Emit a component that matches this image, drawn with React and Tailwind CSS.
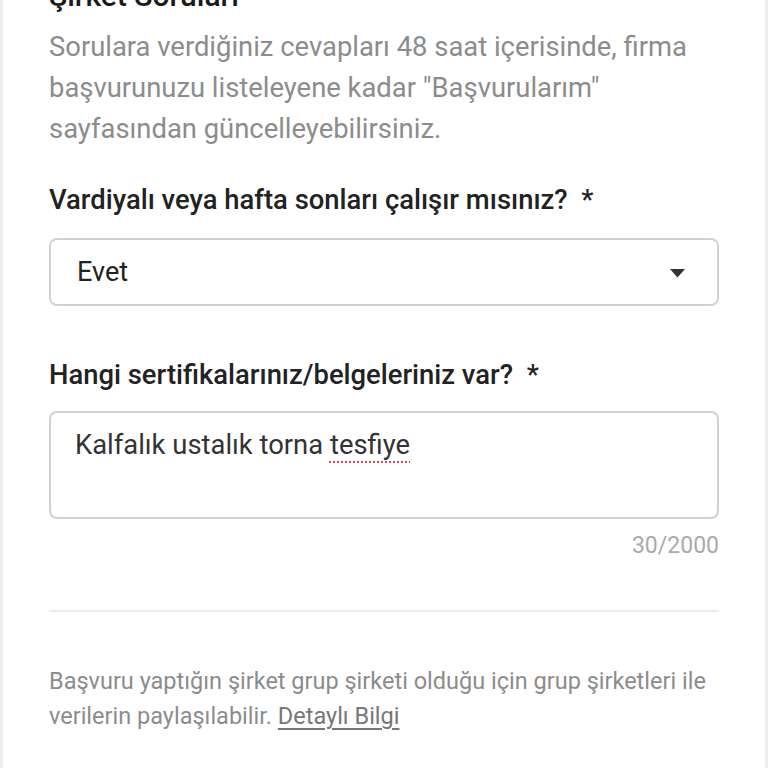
import React from "react";

export default function App() {
  return (
    <div
      className="w-[768px] h-[768px] overflow-hidden bg-[#efefef] px-[3px]"
      style={{ fontFamily: "Roboto, 'Noto Sans', sans-serif" }}
    >
      <div className="flex h-full flex-col bg-white px-[46px]">
        <h2 className="mt-[-22px] text-[30px] leading-[36px] font-medium text-[#1a1a1a]">
          Şirket Soruları
        </h2>
        <p className="mt-[13px] text-[27.4px] leading-[41px] text-[#8c8c8c]">
          Sorulara verdiğiniz cevapları 48 saat içerisinde, firma başvurunuzu listeleyene kadar
          "Başvurularım" sayfasından güncelleyebilirsiniz.
        </p>

        <label className="mt-[34px] block text-[27.4px] leading-[32px] font-medium text-[#222]">
          Vardiyalı veya hafta sonları çalışır mısınız?&nbsp; *
        </label>
        <div className="mt-[22px] flex h-[68px] shrink-0 items-center justify-between rounded-[8px] border-2 border-[#d2d2d2] pl-[26px] pr-[32px]">
          <span className="text-[27px] leading-[36px] text-[#222]">Evet</span>
          <svg width="15" height="9" viewBox="0 0 15 9" className="mt-[3px]">
            <path d="M0 0 L15 0 L7.5 8.5 Z" fill="#333" />
          </svg>
        </div>

        <label className="mt-[53px] block text-[27.4px] leading-[32px] font-medium text-[#222]">
          Hangi sertifikalarınız/belgeleriniz var?&nbsp; *
        </label>
        <div className="mt-[20px] h-[108px] shrink-0 rounded-[8px] border-2 border-[#d2d2d2] px-[24px] pt-[14px]">
          <span className="text-[27.4px] leading-[36px] text-[#333]">
            Kalfalık ustalık torna{" "}
            <span className="underline decoration-dotted decoration-[#e0405a] decoration-2 underline-offset-[7px]">
              tesfiye
            </span>
          </span>
        </div>
        <div className="mt-[12px] text-right text-[23px] leading-[30px] text-[#aaa]">30/2000</div>

        <div className="mt-[49px] h-[2px] shrink-0 bg-[#ebebeb]" />

        <p className="mt-[52px] text-[23.5px] leading-[35px] text-[#8c8c8c]">
          Başvuru yaptığın şirket grup şirketi olduğu için grup şirketleri ile verilerin
          paylaşılabilir.{" "}
          <span className="text-[#777] underline underline-offset-[4px]">Detaylı Bilgi</span>
        </p>
      </div>
    </div>
  );
}
